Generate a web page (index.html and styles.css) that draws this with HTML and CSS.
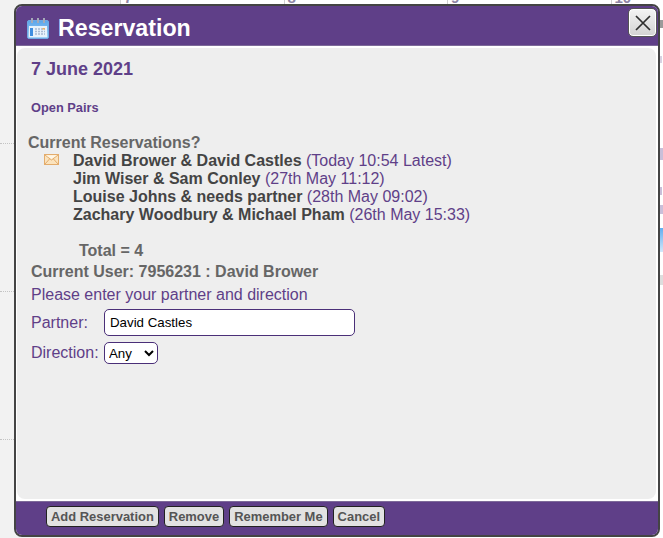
FILE: index.html
```html
<!DOCTYPE html>
<html lang="en">
<head>
    <meta charset="UTF-8">
    <title>Reservation</title>
    <link rel="stylesheet" href="styles.css">
</head>
<body>

    <div class="calendar">
        <div class="cal-side">
            <div class="cal-line"></div>
            <div class="cal-line"></div>
            <div class="cal-line"></div>
        </div>
        <div class="cal-day"><span class="cal-num">7</span></div>
        <div class="cal-day"><span class="cal-num">8</span></div>
        <div class="cal-day"><span class="cal-num">9</span></div>
        <div class="cal-day last"><span class="cal-num">10</span></div>
        <div class="cal-peek">
            <div class="peek peek-a"></div>
            <div class="peek peek-b"></div>
            <div class="peek peek-c"></div>
            <div class="peek peek-d"></div>
            <div class="peek peek-e"></div>
            <div class="peek peek-f"></div>
            <div class="peek peek-g"></div>
        </div>
    </div>

    <div class="dialog">
        <div class="dialog-head">
            <svg class="head-icon" width="22" height="21" viewBox="0 0 22 21">
                <defs>
                    <linearGradient id="cal-top" x1="0" y1="0" x2="0" y2="1">
                        <stop offset="0" stop-color="#5aa5ea"/>
                        <stop offset="1" stop-color="#a8d4f7"/>
                    </linearGradient>
                </defs>
                <rect x="0.5" y="2.500" width="21" height="18" rx="1.500" fill="url(#cal-top)" stroke="#6fa9e2"/>
                <rect x="2" y="8" width="18" height="11" fill="#e8f2fb"/>
                <rect x="3" y="10" width="3" height="8" fill="#3f8ee0"/>
                <path d="M8 11h10M8 13.500h10M8 16h10" stroke="#a9b9d2" stroke-width="1.400" stroke-dasharray="2 1"/>
                <rect x="15.500" y="10" width="2.500" height="1.500" fill="#f0b060"/>
                <path d="M5 0v5M11 0v5M17 0v5" stroke="#a5a9b8" stroke-width="2"/>
            </svg>
            <span class="head-title">Reservation</span>
        </div>
        <div class="dialog-body">
            <div class="date">7 June 2021</div>
            <div class="event">Open Pairs</div>
            <div class="current">Current Reservations?</div>
            <div class="res-block">
                <svg class="mail-icon" width="15" height="11" viewBox="0 0 15 11">
                    <rect x="0.5" y="0.5" width="14" height="10" fill="#fbe3bd" stroke="#e3ac6c"/>
                    <path d="M1 1l6.500 5L14 1M1 10l4.500-5M14 10L9.500 5" fill="none" stroke="#e3ac6c"/>
                    <path d="M2 1.200h11L7.500 5z" fill="#fff6e6"/>
                </svg>
                <ul class="res-list">
                    <li><b>David Brower &amp; David Castles</b> (Today 10:54 Latest)</li>
                    <li><b>Jim Wiser &amp; Sam Conley</b> (27th May 11:12)</li>
                    <li><b>Louise Johns &amp; needs partner</b> (28th May 09:02)</li>
                    <li><b>Zachary Woodbury &amp; Michael Pham</b> (26th May 15:33)</li>
                </ul>
            </div>
            <div class="total">Total = 4</div>
            <div class="user">Current User: 7956231 : David Brower</div>
            <div class="prompt">Please enter your partner and direction</div>
            <div class="field">
                <label class="field-label" for="partner">Partner:</label>
                <input class="partner-input" type="text" id="partner" value="David Castles">
            </div>
            <div class="field">
                <label class="field-label" for="direction">Direction:</label>
                <select class="direction-select" id="direction">
                    <option>Any</option>
                </select>
            </div>
        </div>
        <div class="dialog-foot">
            <button class="foot-btn">Add Reservation</button>
            <button class="foot-btn">Remove</button>
            <button class="foot-btn">Remember Me</button>
            <button class="foot-btn">Cancel</button>
        </div>
        <button class="close-btn" aria-label="Close">
            <svg width="16" height="16" viewBox="0 0 16 16">
                <path d="M1 1l14 14M15 1L1 15" stroke="#2e2e2e" stroke-width="1.700" fill="none"/>
            </svg>
        </button>
    </div>

</body>
</html>
```

FILE: styles.css
```css
html, body {
    margin: 0;
    padding: 0;
    height: 538px;
    overflow: hidden;
}
body {
    font-family: "Liberation Sans", Arial, sans-serif;
    background-color: #ffffff;
    color: #666666;
    position: relative;
}

/* page behind the dialog */
.calendar {
    display: flex;
    height: 538px;
    overflow: hidden;
    position: relative;
}
.cal-side {
    flex: none;
    width: 120px;
    background-color: #f2f2f2;
    box-sizing: border-box;
    padding-top: 143px;
}
.cal-line {
    height: 148px;
    border-top: 1px dotted #c4c4c4;
    box-sizing: border-box;
}
.cal-day {
    flex: none;
    width: 163.500px;
    height: 100px;
    box-sizing: border-box;
    border-left: 1px solid #d0d0d0;
    padding-left: 3px;
}
.cal-day.last {
    width: 52px;
}
.cal-num {
    display: block;
    margin-top: -9px;
    color: #8f85a5;
    font-size: 15px;
    font-weight: bold;
    line-height: 14px;
}
.cal-peek {
    position: absolute;
    right: 0;
    top: 0;
    width: 3px;
    height: 290px;
}
.peek {
    position: absolute;
    left: 0;
    width: 3px;
    background-color: #c9bfd9;
}
.peek-a { top: 20px; height: 8px; background-color: #9a9a9a; }
.peek-b { top: 56px; height: 7px; width: 2px; background-color: #d8d2e2; }
.peek-c { top: 148px; height: 12px; }
.peek-d { top: 187px; height: 8px; width: 2px; }
.peek-e { top: 205px; height: 9px; }
.peek-f { top: 228px; height: 24px; background: linear-gradient(#62aef0, #d3e8fa); }
.peek-g { top: 275px; height: 10px; background-color: #dddddd; }

.dialog {
    position: absolute;
    left: 14px;
    top: 4px;
    width: 646px;
    height: 533px;
    box-sizing: border-box;
    border: 2px solid #444444;
    border-radius: 8px;
    background-color: #ffffff;
    display: flex;
    flex-direction: column;
}
.dialog-head {
    height: 40px;
    flex: none;
    background-color: #5f3f88;
    border-bottom: 1px solid #7d6a99;
    border-radius: 6px 6px 0 0;
    display: flex;
    align-items: center;
    padding: 5px 0 0 11px;
    gap: 9px;
    box-sizing: border-box;
}
.head-title {
    color: #ffffff;
    font-size: 23.200px;
    font-weight: bold;
}
.dialog-body {
    flex: 1;
    margin: 2px 2px 2px 1px;
    background-color: #eeeeee;
    border-radius: 8px;
    padding: 11px 0 0 14px;
}
.date {
    color: #5f3f88;
    font-size: 18px;
    font-weight: bold;
    line-height: 21px;
}
.event {
    color: #5f3f88;
    font-size: 12.800px;
    font-weight: bold;
    margin-top: 21px;
    line-height: 14px;
}
.current {
    font-size: 16px;
    font-weight: bold;
    line-height: 18px;
    margin: 19px 0 0 -3px;
}
.res-block {
    display: flex;
    align-items: flex-start;
    margin-left: 13px;
}
.mail-icon {
    flex: none;
    margin-top: 2px;
}
.res-list {
    list-style: none;
    margin: 0 0 0 14px;
    padding: 0;
    font-size: 16px;
    line-height: 18px;
    color: #5f3f88;
}
.res-list b {
    color: #444444;
}
.total {
    font-size: 16px;
    font-weight: bold;
    line-height: 18px;
    margin: 18px 0 0 48px;
}
.user {
    font-size: 16px;
    font-weight: bold;
    line-height: 18px;
    margin-top: 3px;
}
.prompt {
    color: #5f3f88;
    font-size: 16px;
    line-height: 18px;
    margin-top: 5px;
}
.field {
    display: flex;
    align-items: center;
    margin-top: 5px;
    color: #5f3f88;
    font-size: 16px;
}
.field + .field {
    margin-top: 6px;
}
.field-label {
    width: 73px;
}
.partner-input {
    width: 251px;
    height: 27px;
    box-sizing: border-box;
    border: 1px solid #4a2f78;
    border-radius: 5px;
    padding: 0 5px;
    font-family: "Liberation Sans", Arial, sans-serif;
    font-size: 13.300px;
    color: #000000;
    background-color: #ffffff;
}
.direction-select {
    width: 54px;
    height: 22px;
    border: 1px solid #4a2f78;
    border-radius: 5px;
    font-family: "Liberation Sans", Arial, sans-serif;
    font-size: 13.300px;
    color: #000000;
    background-color: #ffffff;
}
.dialog-foot {
    height: 34px;
    flex: none;
    background-color: #5f3f88;
    border-top: 1px solid #7d6a99;
    border-radius: 0 0 6px 6px;
    box-sizing: border-box;
    display: flex;
    align-items: flex-start;
    padding: 4px 0 0 30px;
    gap: 5px;
}
.foot-btn {
    height: 21px;
    padding: 0 4px;
    border: 1px solid #222222;
    border-radius: 4px;
    background-color: #e2e2e2;
    color: #555555;
    font-family: "Liberation Sans", Arial, sans-serif;
    font-size: 12.950px;
    font-weight: bold;
}
.close-btn {
    position: absolute;
    top: 2px;
    right: 1px;
    width: 29px;
    height: 29px;
    padding: 0;
    border: 1px solid #555555;
    border-radius: 5px;
    background: linear-gradient(#f4f4f4, #d2d2d2);
    box-shadow: inset 0 0 0 1px #ffffff;
    display: flex;
    align-items: center;
    justify-content: center;
}
```
